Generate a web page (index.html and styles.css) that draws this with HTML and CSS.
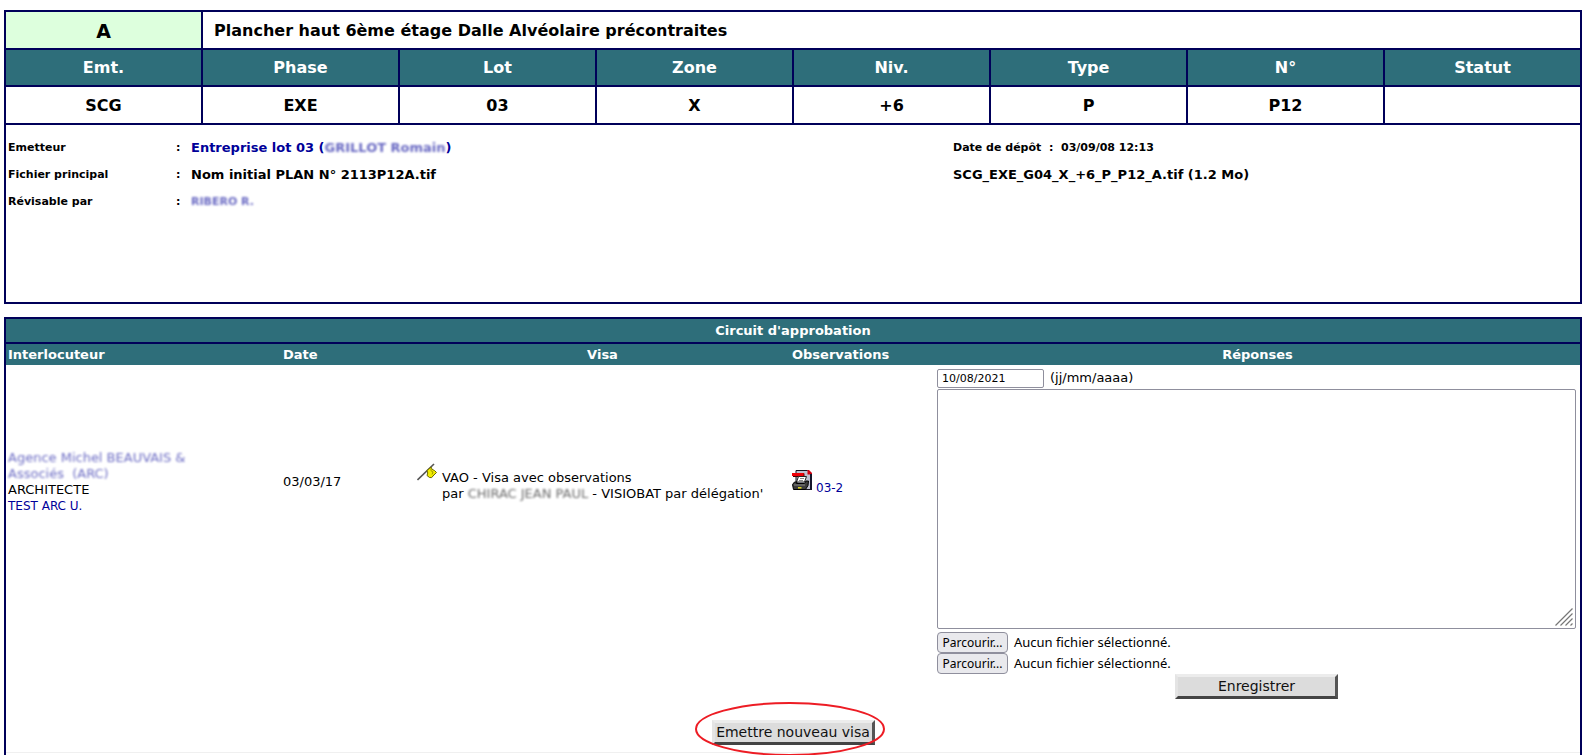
FILE: index.html
```html
<!DOCTYPE html>
<html lang="fr">
<head>
<meta charset="utf-8">
<title>Circuit d'approbation</title>
<link rel="stylesheet" href="styles.css">
</head>
<body>
<table class="sheet">
  <tr class="title-row">
    <td class="index">A</td>
    <td class="title" colspan="7">Plancher haut 6ème étage Dalle Alvéolaire précontraites</td>
  </tr>
  <tr class="codes-head">
    <th>Emt.</th><th>Phase</th><th>Lot</th><th>Zone</th><th>Niv.</th><th>Type</th><th>N°</th><th>Statut</th>
  </tr>
  <tr class="codes">
    <td>SCG</td><td>EXE</td><td>03</td><td>X</td><td>+6</td><td>P</td><td>P12</td><td></td>
  </tr>
  <tr>
    <td class="details-cell" colspan="8">
      <div class="details">
        <span>Emetteur</span><span>:</span>
        <a class="value link" href="#">Entreprise lot 03 (<span class="masked">GRILLOT Romain</span>)</a>
        <span>Date de dépôt&nbsp; :&nbsp; 03/09/08 12:13</span>
        <span>Fichier principal</span><span>:</span>
        <span class="value">Nom initial PLAN N° 2113P12A.tif</span>
        <span class="value">SCG_EXE_G04_X_+6_P_P12_A.tif (1.2 Mo)</span>
        <span>Révisable par</span><span>:</span>
        <a class="link" href="#"><span class="masked">RIBERO R.</span></a>
      </div>
    </td>
  </tr>
</table>

<form class="circuit">
  <h2 class="circuit-title">Circuit d'approbation</h2>
  <table class="visas">
    <colgroup>
      <col class="col-who"><col class="col-date"><col class="col-visa"><col class="col-obs"><col>
    </colgroup>
    <thead>
      <tr><th class="left">Interlocuteur</th><th class="left">Date</th><th>Visa</th><th class="left">Observations</th><th>Réponses</th></tr>
    </thead>
    <tbody>
      <tr>
        <td class="info">
          <a class="link masked" href="#">Agence Michel BEAUVAIS &amp;<br>Associés&nbsp; (ARC)</a><br>
          ARCHITECTE<br>
          <a class="link small" href="#">TEST ARC U.</a>
        </td>
        <td class="info">03/03/17</td>
        <td class="info">
          <div class="visa">
            <svg class="flag" width="20" height="18" viewBox="0 0 20 18" aria-hidden="true">
              <path d="M0.5 17L17 1" stroke="#555" stroke-width="1.6" fill="none"/>
              <path d="M10 7.500L14 4Q14.500 7 17.500 7.500L19.500 9.500L16 13Q15 15.500 12.500 14.500L10 12.500Q11.500 10 10 7.500Z" fill="#f2ee00" stroke="#6a6600" stroke-width="1"/>
              <path d="M14 5Q13 8.500 16 9L15 11.500" stroke="#a09a00" fill="none"/>
            </svg>
            <div>VAO - Visa avec observations<br>par <span class="masked">CHIRAC JEAN PAUL</span> - VISIOBAT par délégation'</div>
          </div>
        </td>
        <td class="info">
          <a class="link small obs" href="#">
            <svg width="20" height="20" viewBox="0 0 20 20" aria-hidden="true">
              <path d="M4 .5H15.500L19 4V19.500H4Z" fill="#bfc0d0" stroke="#15151f"/>
              <path d="M15.500 0H17L20 3V4.500H15.500Z" fill="#d00010"/>
              <path d="M19 4V20" stroke="#15152a" stroke-width="2"/>
              <path d="M0 3H12V6H0Z" fill="#ee0008"/>
              <path d="M12 3.500V6" stroke="#700000"/>
              <path d="M1 6.500H7" stroke="#400000"/>
              <path d="M6.500 6.500H14.500L12.500 12H4.500Z" fill="#fff" stroke="#222"/>
              <path d="M8 8.500H12M7 10.500H11" stroke="#888"/>
              <path d="M2.500 12H5L4.500 13.500H12.500L14 11H16.500L16 15.500L13.500 19.500H1.500L.5 14.500Z" fill="#3c3c3c" stroke="#000"/>
              <path d="M2 15H13" stroke="#8a8a8a"/>
              <path d="M6 17.800H9.500" stroke="#e5df20" stroke-width="1.500"/>
            </svg>
            <span>03-2</span>
          </a>
        </td>
        <td>
          <div class="reply">
            <label class="date-line"><input class="date" type="text" value="10/08/2021"> (jj/mm/aaaa)</label>
            <div class="editor">
              <textarea class="answer" aria-label="Réponse"></textarea>
              <svg class="grip" width="18" height="18" viewBox="0 0 18 18" aria-hidden="true">
                <path d="M.5 17.500L17.500 .5M5.500 17.500L17.500 5.500M10.500 17.500L17.500 10.500M15.500 17.500L17.500 15.500" stroke="#777" stroke-width="1.200" fill="none"/>
              </svg>
            </div>
            <label class="file"><input class="file-input" type="file"><span class="browse">Parcourir...</span>Aucun fichier sélectionné.</label>
            <label class="file"><input class="file-input" type="file"><span class="browse">Parcourir...</span>Aucun fichier sélectionné.</label>
            <button class="push" type="button">Enregistrer</button>
          </div>
        </td>
      </tr>
    </tbody>
  </table>
  <div class="actions">
    <div class="highlight">
      <button class="push" type="button">Emettre nouveau visa</button>
      <svg class="ring" viewBox="0 0 190 54" aria-hidden="true"><ellipse cx="95" cy="27" rx="94" ry="26" fill="none" stroke="#ed1c24" stroke-width="2"/></svg>
    </div>
  </div>
</form>
</body>
</html>
```
FILE: styles.css
```css
* { box-sizing: border-box; }

body {
  margin: 10px 8px 0 4px;
  background: #fff;
  color: #000;
  font: 13px/16px Verdana, "DejaVu Sans", sans-serif;
  overflow: hidden;
}

.link { color: #000099; text-decoration: none; }
.small { font-size: 12px; }
.masked { opacity: .6; filter: blur(1px); }

.sheet {
  width: 100%;
  border-collapse: collapse;
  table-layout: fixed;
  font-weight: bold;
}
.sheet td, .sheet th {
  border: 2px solid #000059;
  padding: 1px 0 0;
  text-align: center;
}
.title-row { height: 38px; font-size: 16px; }
.sheet .index { background: #ddffdd; font-size: 19px; }
.sheet .title { padding-left: 11px; text-align: left; }
.codes-head { height: 37px; background: #2e6e7a; color: #fff; font-size: 16px; }
.codes { height: 38px; font-size: 16px; }
.sheet .details-cell { height: 179px; padding: 0; vertical-align: top; text-align: left; }
.details {
  display: grid;
  grid-template-columns: 168px 15px 1fr 627px;
  grid-template-rows: 28px 26px 28px;
  align-items: center;
  padding: 9px 0 0 2px;
  font-size: 11px;
}
.value { font-size: 13px; }

.circuit {
  margin-top: 13px;
  padding-bottom: 8px;
  border: 2px solid #000059;
  border-bottom: 0;
}
.circuit-title {
  margin: 0;
  padding: 4px 0 3px;
  border-bottom: 2px solid #000059;
  background: #2e6e7a;
  color: #fff;
  font-size: 13px;
  line-height: 16px;
  text-align: center;
}
.visas { width: 100%; border-collapse: collapse; table-layout: fixed; }
.visas th { height: 21px; padding: 0 2px; background: #2e6e7a; color: #fff; }
.visas .left { text-align: left; }
.visas td { padding: 3px 4px 2px 2px; }
.visas .info { padding-bottom: 105px; }
.col-who { width: 275px; }
.col-date { width: 134px; }
.col-visa { width: 375px; }
.col-obs { width: 145px; }

.visa { display: flex; gap: 5px; }
.visa div { padding-top: 7px; white-space: nowrap; }
.flag { flex: none; }
.obs { display: flex; align-items: flex-end; gap: 4px; }
.obs span { line-height: 12px; }
.obs svg { margin-bottom: 4px; }

.reply { display: flex; flex-direction: column; align-items: flex-start; }
.date-line { display: flex; align-items: flex-start; gap: 6px; height: 21px; line-height: 20px; }
.date {
  width: 107px;
  height: 19px;
  margin: 1px 0 0;
  padding: 0 4px;
  border: 1px solid #8f8f9d;
  border-radius: 2px;
  font: 11px Verdana, "DejaVu Sans", sans-serif;
}
.editor { position: relative; width: 100%; margin-bottom: 3px; }
.answer {
  display: block;
  width: 100%;
  height: 240px;
  border: 1px solid #8f8f9d;
  border-radius: 2px;
  resize: none;
}
.grip { position: absolute; right: 3px; bottom: 3px; }
.file {
  display: flex;
  align-items: center;
  gap: 6px;
  font: 13px/19px "Noto Sans", sans-serif;
}
.file-input { position: absolute; width: 1px; height: 1px; opacity: 0; }
.browse {
  width: 71px;
  border: 1px solid #8f8f9d;
  border-radius: 4px;
  background: #e9e9ed;
  font-size: 12px;
  text-align: center;
}
.push {
  display: block;
  width: 163px;
  height: 25px;
  padding: 0 0 2px;
  border: 3px solid;
  border-color: #ececec #555 #444 #e4e4e4;
  background: #dcdcdc;
  color: #111;
  font: 14px/16px Verdana, "DejaVu Sans", sans-serif;
  white-space: nowrap;
}
.reply .push { align-self: center; }

.actions {
  display: flex;
  justify-content: center;
  padding: 19px 0 7px;
  border-bottom: 1px solid #f0f0f0;
}
.highlight { position: relative; }
.ring { position: absolute; left: -17px; top: -18px; width: 190px; height: 54px; pointer-events: none; }
```
